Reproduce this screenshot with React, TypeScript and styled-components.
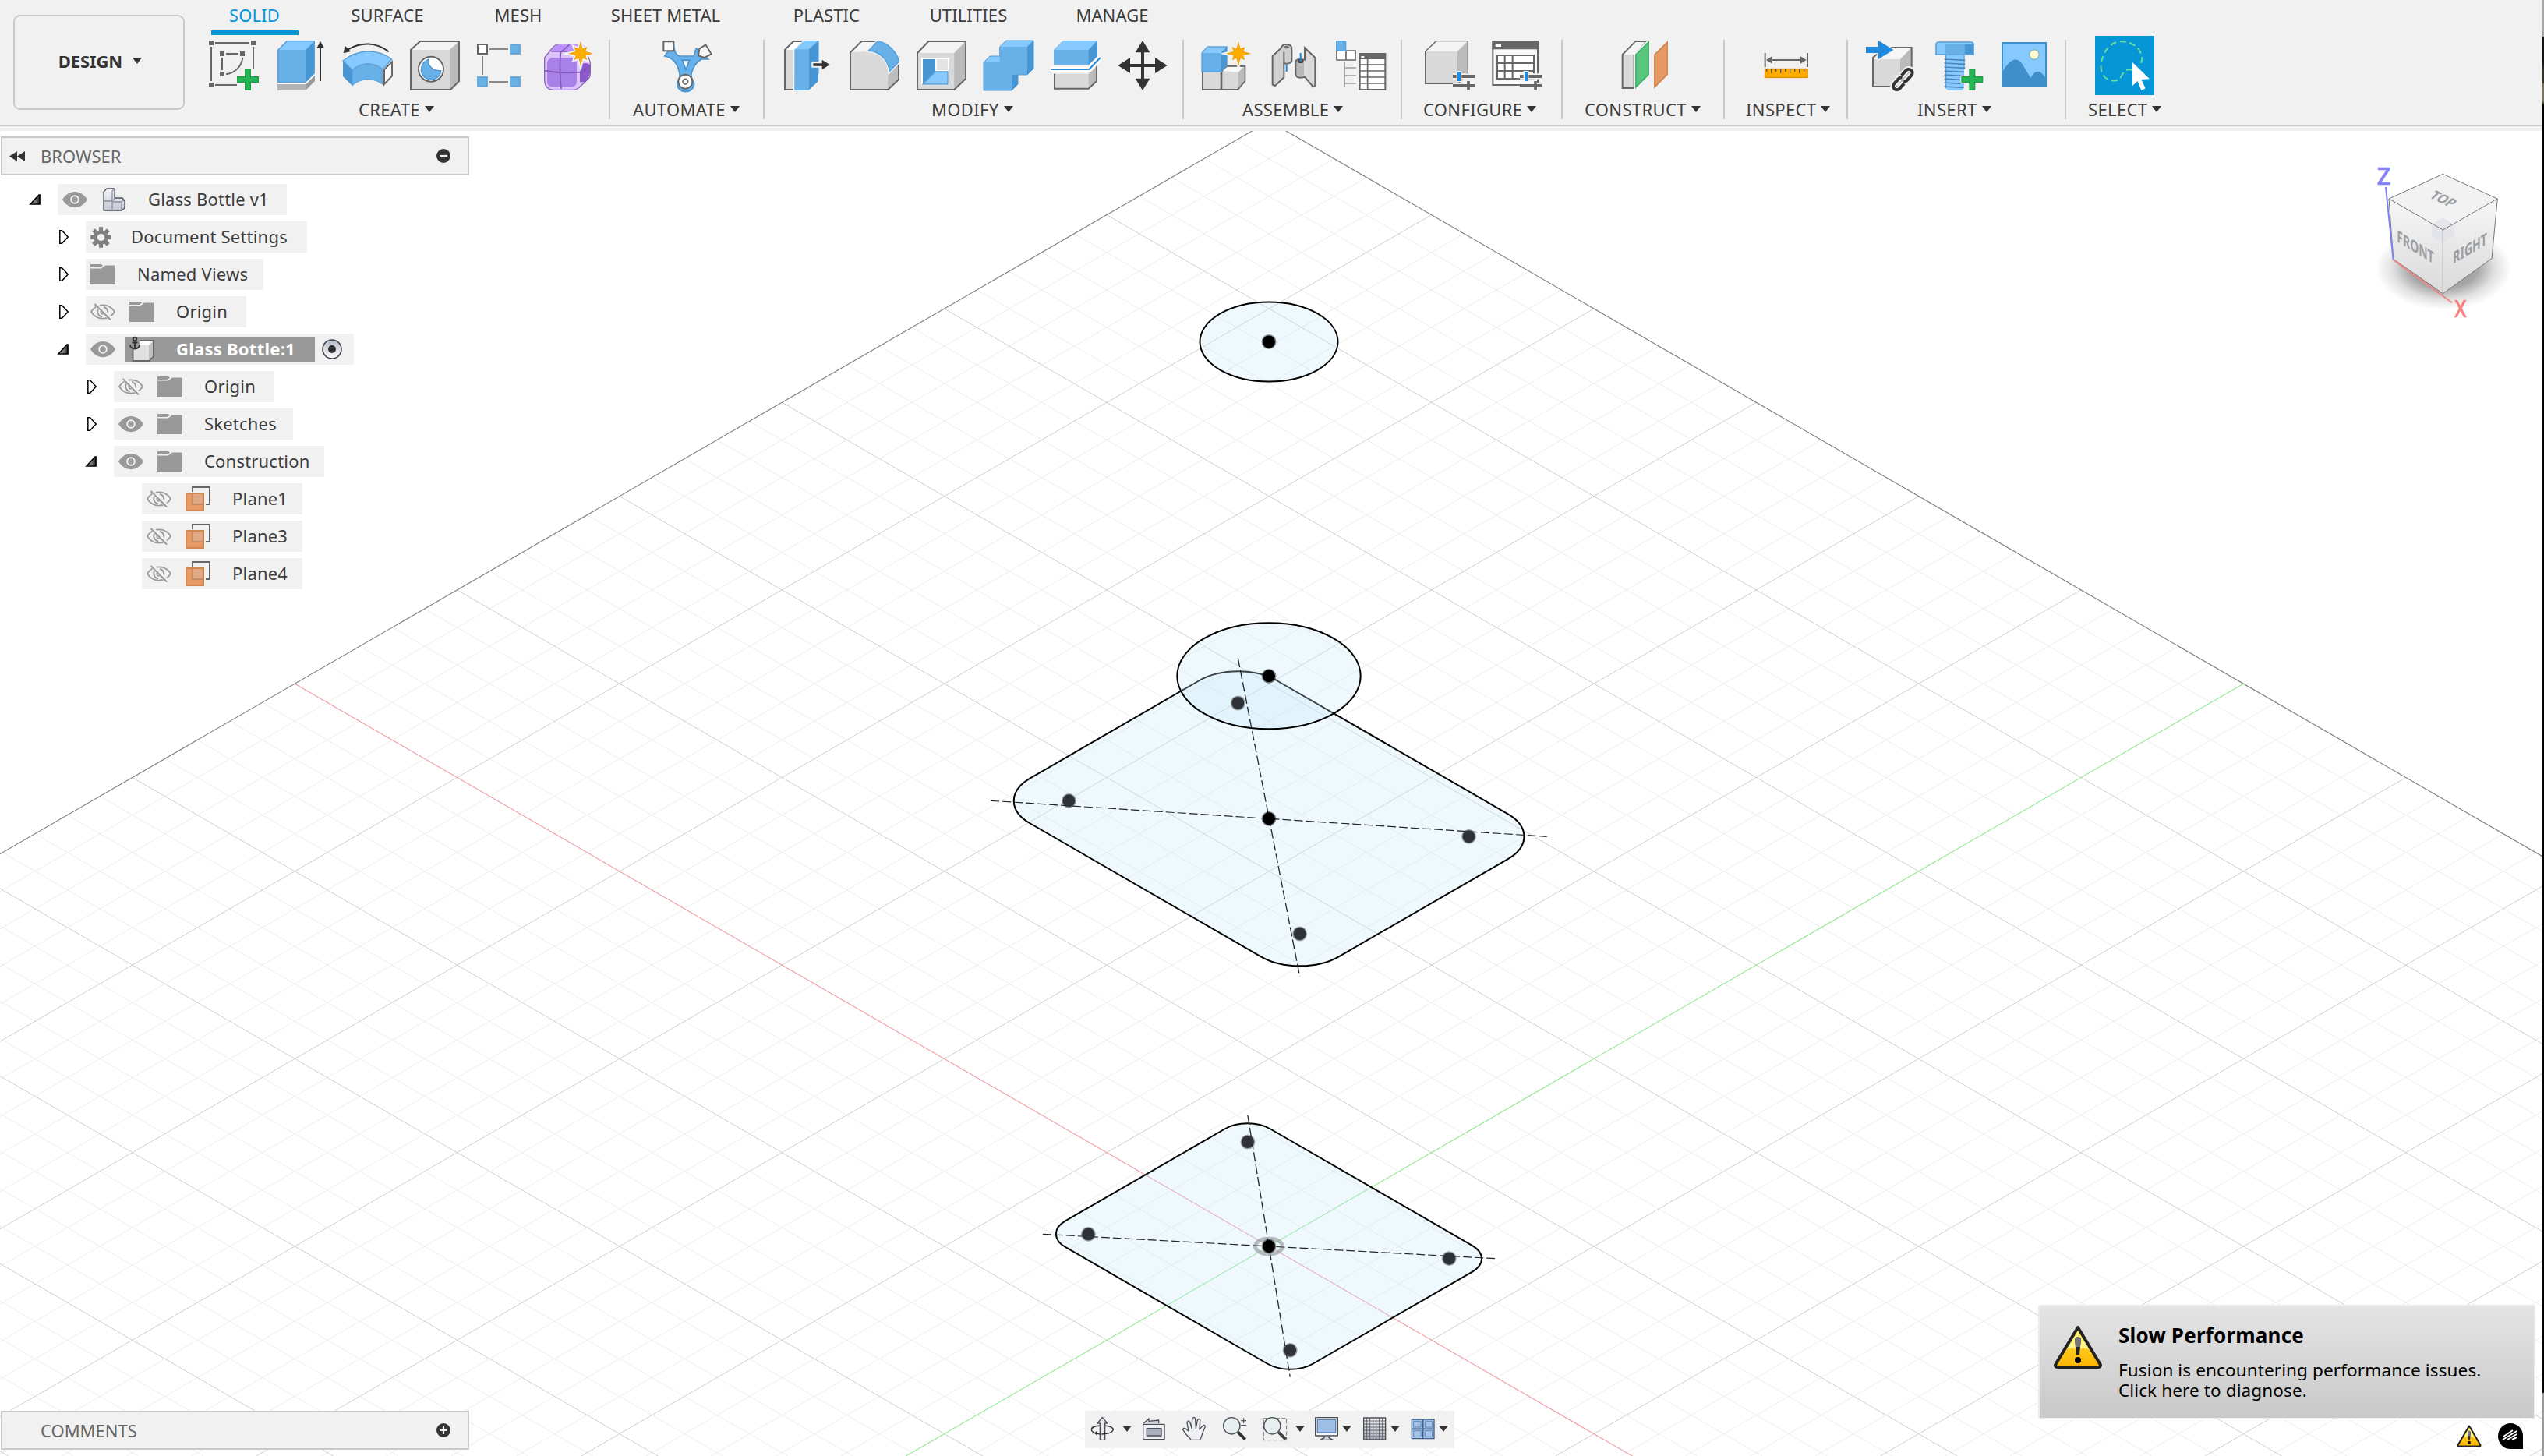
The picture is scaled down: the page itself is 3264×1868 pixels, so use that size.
import React from "react";
import styled, { createGlobalStyle, css } from "styled-components";

const GlobalStyle = createGlobalStyle`
  * { box-sizing: border-box; }
  html, body { margin: 0; padding: 0; }
  body {
    width: 3264px;
    height: 1868px;
    overflow: hidden;
    background: #fff;
    font-family: "Noto Sans", "Open Sans", sans-serif;
    color: #3c3c3c;
  }
  svg { display: block; flex: none; overflow: visible; }
`;

const C = {
  bar: "#f1f1f1",
  line: "#c9c9c9",
  ink: "#3c3c3c",
  accent: "#0696d7",
  grey: "#666666",
  front: "#68b0e8",
  top: "#86c9ff",
  side: "#4796d3",
  edge: "#5a9fd6",
};

/* ---------- shell ---------- */

const Shell = styled.div`
  display: flex;
  width: 3264px;
  height: 1868px;
`;

const Window = styled.div`
  display: flex;
  flex-direction: column;
  width: 3262px;
`;

const DesktopStrip = styled.div`
  width: 2px;
  background: linear-gradient(
    #a4a8ac 0 47px, #14110f 47px 80px, #3a3226 90px 106px, #7d7455 108px 130px,
    #000 135px 1787px, #9a9a9a 1787px 1868px
  );
`;

/* ---------- ribbon ---------- */

const Ribbon = styled.header`
  display: flex;
  height: 168px;
  padding-left: 17px;
  background: linear-gradient(${C.bar} 0 161px, ${C.line} 161px 162px, ${C.bar} 162px);
`;

const WorkspaceButton = styled.button`
  display: flex;
  align-items: center;
  justify-content: center;
  gap: 13px;
  width: 220px;
  height: 122px;
  margin-top: 19px;
  padding: 0 0 4px 3px;
  border: 2px solid ${C.line};
  border-radius: 9px;
  background: ${C.bar};
  color: #333;
  font: 700 22px/30px "Noto Sans", sans-serif;
  letter-spacing: -0.1px;
`;

const RibbonBody = styled.div`
  display: flex;
  flex-direction: column;
`;

const Tabs = styled.nav`
  display: flex;
  gap: 41px;
  height: 51px;
  padding-left: 34px;
`;

const Tab = styled.div<{ $w: number; $active?: boolean }>`
  width: ${(p) => p.$w}px;
  height: 45px;
  border-bottom: 6px solid ${(p) => (p.$active ? C.accent : "transparent")};
  color: ${(p) => (p.$active ? C.accent : C.ink)};
  font-size: 22px;
  line-height: 39px;
  letter-spacing: 0.1px;
  text-indent: -1px;
  text-align: center;
  white-space: nowrap;
`;

const Groups = styled.div`
  display: flex;
  height: 102px;
`;

const Group = styled.section<{ $w: number; $last?: boolean }>`
  display: flex;
  flex-direction: column;
  width: ${(p) => p.$w}px;
  border-right: ${(p) => (p.$last ? "0" : `2px solid ${C.line}`)};
`;

const Tools = styled.div<{ $inset: number }>`
  display: flex;
  gap: 22px;
  height: 65px;
  padding: 1px 0 0 ${(p) => p.$inset}px;
`;

const GroupLabel = styled.div<{ $inset: number }>`
  display: flex;
  align-items: center;
  gap: 6px;
  padding-left: ${(p) => p.$inset}px;
  margin-top: 9px;
  height: 30px;
  font-size: 22px;
  line-height: 30px;
  letter-spacing: 0.35px;
  white-space: nowrap;
`;

const SelectTile = styled.div`
  width: 76px;
  height: 76px;
  margin: -6px 0 -6px;
  padding: 6px;
  background: ${C.accent};
`;

const Caret = styled.span<{ $w?: number }>`
  width: 0;
  height: 0;
  border: ${(p) => (p.$w ?? 12) / 2}px solid transparent;
  border-top: 8px solid #333;
  border-bottom: 0;
`;

/* ---------- tool icons (192-unit grid, 3 units per pixel) ---------- */

const Tool = ({ children }: { children: React.ReactNode }) => (
  <svg width="64" height="64" viewBox="0 0 192 192">{children}</svg>
);

const Plus = ({ x, y }: { x: number; y: number }) => (
  <g transform={`translate(${x} ${y})`}>
    <path d="M30 0h24v30h30v24h-30v30h-24v-30h-30v-24h30z" fill="#1e9e46" stroke="#f1f1f1" strokeWidth="6" paintOrder="stroke" />
    <path d="M34 4h16v30h30v16h-30v30h-16v-30h-30v-16h30z" fill="#27b454" />
  </g>
);

const starPoints = (cx: number, cy: number, R: number) => {
  const pts: string[] = [];
  for (let i = 0; i < 16; i++) {
    const a = (Math.PI / 8) * i - Math.PI / 2;
    const r = i % 2 ? R * 0.42 : i % 4 === 0 ? R : R * 0.74;
    pts.push(`${(cx + r * Math.cos(a)).toFixed(1)},${(cy + r * Math.sin(a)).toFixed(1)}`);
  }
  return pts.join(" ");
};
const Star = ({ x, y }: { x: number; y: number }) => (
  <>
    <polygon points={starPoints(x, y, 48)} fill="#e59a00" stroke="#f1f1f1" strokeWidth="12" paintOrder="stroke" />
    <polygon points={starPoints(x, y, 40)} fill="#ffab00" />
  </>
);

const SketchIcon = () => (
  <Tool>
    <g fill={C.grey}>
      <path d="M0 0h18v18H0zM162 0h18v18h-18zM0 162h18v18H0zM42 42h18v18H42zM120 42h18v18h-18zM42 120h18v18H42z" />
    </g>
    <path d="M24 9h132M9 24v132M171 24v84M24 171h84M66 51h48M51 66v48M66 130c36-6 60-30 64-64" fill="none" stroke={C.grey} strokeWidth="6" />
    <Plus x={108} y={108} />
  </Tool>
);
const ExtrudeIcon = () => (
  <Tool>
    <path d="M6 168h108v24H6z" fill="#b3b3b3" />
    <path d="M114 168l36-36v24l-36 36z" fill="#9a9a9a" />
    <path d="M6 165H115L152 128" fill="none" stroke="#fff" strokeWidth="6" />
    <path d="M6 36h108v126H6z" fill={C.front} />
    <path d="M6 36L42 0h108l-36 36z" fill={C.top} />
    <path d="M114 36l36-36v126l-36 36z" fill={C.side} />
    <path d="M8 160V37L43 2h105v123l-35 35z" fill="none" stroke={C.edge} strokeWidth="4" />
    <path d="M171 156V20" stroke="#333" strokeWidth="6" />
    <path d="M157 30L171 2l15 28z" fill="#333" />
  </Tool>
);
const RevolveIcon = () => (
  <Tool>
    <path d="M0 78C58 32 132 30 188 72L153 110C118 82 70 82 36 114z" fill={C.top} stroke={C.edge} strokeWidth="4" />
    <path d="M0 78L36 114V174L0 138z" fill={C.side} />
    <path d="M36 114C70 84 116 84 151 112V168C116 142 70 142 36 174z" fill={C.front} stroke={C.edge} strokeWidth="3" />
    <path d="M159 112L189 82V136L159 168z" fill="#fafafa" stroke={C.grey} strokeWidth="6" />
    <path d="M176 43C130 6 70 4 20 34" fill="none" stroke="#333" strokeWidth="6" />
    <path d="M2 49L8 20L30 42z" fill="#333" />
  </Tool>
);
const BoxShell = () => (
  <>
    <path d="M3 36L39 3h150v153l-36 33H3z" fill="#d9d9d9" />
    <path d="M3 36L39 3h150l-36 33z" fill="#f3f3f3" />
    <path d="M153 36l36-33v153l-36 33z" fill="#bbbbbb" />
    <path d="M3 36L39 3h150v153l-33 33H3z" fill="none" stroke={C.grey} strokeWidth="6" />
  </>
);
const HoleIcon = () => (
  <Tool>
    <BoxShell />
    <circle cx="81" cy="110" r="48" fill="#fff" stroke={C.grey} strokeWidth="6" />
    <path d="M71 72C30 88 34 150 84 150C108 148 120 130 119 116C92 118 66 100 71 72z" fill={C.front} stroke={C.side} strokeWidth="4" />
  </Tool>
);
const PatternIcon = () => (
  <Tool>
    <path d="M48 33h72M48 159h72M21 60v72" stroke={C.grey} strokeWidth="5" />
    <rect x="3" y="15" width="36" height="36" fill="#fff" stroke={C.grey} strokeWidth="6" />
    <g fill={C.front} stroke={C.edge} strokeWidth="5">
      <rect x="129" y="15" width="36" height="36" /><rect x="3" y="141" width="36" height="36" /><rect x="129" y="141" width="36" height="36" />
    </g>
  </Tool>
);
const FormIcon = () => (
  <Tool>
    <path d="M2 66L36 24Q48 14 60 14H130Q150 14 160 34L178 84V128Q178 140 170 148L134 182Q124 190 112 190H36Q2 188 2 150z" fill="#dcc4fb" stroke="#8a64bd" strokeWidth="4" />
    <path d="M24 42L50 17H140L120 44Z" fill="#bd8ffc" />
    <rect x="12" y="66" width="114" height="114" rx="22" fill="#a97fe8" />
    <path d="M138 96Q156 78 178 94V126L160 160H138z" fill="#8a58c8" />
    <path d="M2 116Q64 128 140 122L178 96M66 186Q58 110 64 46Q80 30 98 16M28 42H120" fill="none" stroke="#8159b8" strokeWidth="5" />
    <Star x={141} y={50} />
  </Tool>
);
const AutomateIcon = () => (
  <Tool>
    <path d="M8 60C40 66 60 92 66 130C70 150 58 150 56 166A32 30 0 0 0 122 166C120 150 106 148 112 124C118 100 130 84 150 72L176 72L130 30C122 46 126 56 118 60H68C52 58 44 40 44 10z" fill={C.front} stroke={C.side} strokeWidth="5" />
    <path d="M76 76h28l-14 36z" fill="#fff" stroke={C.side} strokeWidth="6" />
    <path d="M4 4h38v36H4z" fill="#f8f8f8" stroke={C.grey} strokeWidth="6" />
    <path d="M142 32L166 16L188 52L162 66L138 58z" fill="#f8f8f8" stroke={C.grey} strokeWidth="6" />
    <circle cx="88" cy="158" r="27" fill="#fff" stroke={C.grey} strokeWidth="6" />
    <circle cx="88" cy="158" r="10" fill="none" stroke={C.grey} strokeWidth="5" />
  </Tool>
);
const PressPullIcon = () => (
  <Tool>
    <path d="M9 36L42 3H76L42 36V189H9z" fill="#d9d9d9" /><path d="M9 36L42 3h34L42 36z" fill="#fff" />
    <path d="M42 189H9V36L42 3H74" fill="none" stroke={C.grey} strokeWidth="6" />
    <path d="M46 36L84 0h56v126l-38 66H46z" fill={C.front} stroke="#f1f1f1" strokeWidth="6" paintOrder="stroke" />
    <path d="M50 34L84 0h52l-34 34z" fill={C.top} /><path d="M102 34L138 2V156L102 190z" fill={C.side} />
    <path d="M118 88h34v-14l30 19-30 19v-14h-34z" fill="#333" stroke="#f1f1f1" strokeWidth="12" paintOrder="stroke" />
  </Tool>
);
const FilletIcon = () => (
  <Tool>
    <path d="M3 48L44 3H108L190 90V150L148 189H3z" fill="#d9d9d9" />
    <path d="M3 46L44 3H110L74 42z" fill="#f5f5f5" />
    <path d="M148 128L190 90V150L148 189z" fill="#bdbdbd" />
    <path d="M100 3H46L3 46V189H148L189 150V94" fill="none" stroke={C.grey} strokeWidth="6" />
    <path d="M108 0C160 8 190 60 192 82L152 124C152 80 116 42 70 42z" fill={C.front} stroke="#f6f6f6" strokeWidth="8" paintOrder="stroke" />
    <path d="M108 2C160 10 188 60 190 82L154 118C150 78 118 42 74 38z" fill="none" stroke={C.edge} strokeWidth="4" />
  </Tool>
);
const ShellIcon = () => (
  <Tool>
    <path d="M3 48L46 3h143v144l-44 42H3z" fill="#d9d9d9" /><path d="M3 48L46 3h143l-44 45z" fill="#f3f3f3" /><path d="M145 48l44-45v144l-44 42z" fill="#bbb" />
    <path d="M3 48L46 3h143v144l-44 42H3z" fill="none" stroke={C.grey} strokeWidth="6" />
    <path d="M18 66h108v106H18z" fill="#fff" /><path d="M24 72h48v48L24 168z" fill={C.side} />
    <path d="M24 168L72 120h48v48z" fill={C.top} stroke={C.edge} strokeWidth="4" /><path d="M78 72h42v42H78z" fill="#e4e4e4" />
  </Tool>
);
const CombineIcon = () => (
  <Tool>
    <path d="M0 84L24 60H62V24L86 0H192V108L168 132H132V168L108 192H0z" fill={C.front} stroke={C.edge} strokeWidth="3" />
    <path d="M2 84L24 62H62V84zM64 24L86 2H190L168 24z" fill={C.top} />
    <path d="M168 24L192 0V108L168 132zM110 132H132V168L110 192z" fill={C.side} />
  </Tool>
);
const SplitIcon = () => (
  <Tool>
    <path d="M15 128H146L178 98V156L146 184H15z" fill="#d9d9d9" /><path d="M146 128L178 98V156L146 184z" fill="#bbb" />
    <path d="M15 128V185H146L177 156V98" fill="none" stroke={C.grey} strokeWidth="6" />
    <path d="M12 36L48 0H180V60L146 94H12z" fill={C.front} /><path d="M14 36L48 2H178L146 36z" fill={C.top} /><path d="M146 36L180 0V60L146 94z" fill={C.side} />
    <path d="M0 111H148L191 66" fill="none" stroke="#fff" strokeWidth="22" />
    <path d="M0 111H148L191 66" fill="none" stroke="#1f8ade" strokeWidth="6" />
  </Tool>
);
const MoveIcon = () => (
  <Tool>
    <path d="M96 0L124 46H102V90H144V66L191 96L144 126V102H102V146H124L96 192L68 146H90V102H48V126L1 96L48 66V90H90V46H68z" fill="#333" />
  </Tool>
);
const NewComponentIcon = () => (
  <Tool>
    <path d="M3 120H74V189H3z" fill="#d9d9d9" stroke={C.grey} strokeWidth="6" />
    <path d="M76 120L96 98H166V156L138 189H76z" fill="#d9d9d9" stroke={C.grey} strokeWidth="6" />
    <path d="M80 118L98 102H162L140 122z" fill="#f8f8f8" /><path d="M140 122L163 102V155L140 184z" fill="#bbb" />
    <path d="M0 48L22 24H96V96L74 120H0z" fill={C.front} stroke={C.edge} strokeWidth="4" /><path d="M2 48L22 26H94L74 48z" fill={C.top} /><path d="M74 48L96 26V96L74 118z" fill={C.side} />
    <Star x={141} y={50} />
  </Tool>
);
const JointIcon = () => (
  <Tool>
    <path d="M14 60L46 30Q54 12 68 16Q88 16 88 30V78Q84 92 58 88V142L24 174L14 170z" fill="#d0d0d0" stroke={C.grey} strokeWidth="6" />
    <path d="M58 88V44" stroke={C.grey} strokeWidth="6" /><ellipse cx="68" cy="26" rx="10" ry="5" fill={C.grey} />
    <path d="M138 28L178 66V174L170 178L138 140Q106 148 104 132V80Q106 68 138 74z" fill="#d9d9d9" stroke={C.grey} strokeWidth="6" />
    <path d="M107 82h28v52h-28z" fill="#b8b8b8" /><ellipse cx="122" cy="80" rx="12" ry="7" fill="#444" />
    <path d="M68 92V120M122 48V80" stroke="#1f8ade" strokeWidth="6" />
  </Tool>
);
const BomIcon = () => (
  <Tool>
    <path d="M3 39h36v36H3zM39 39h36v36H39z" fill="#fff" stroke={C.grey} strokeWidth="5" />
    <rect x="2" y="2" width="36" height="38" fill={C.front} stroke={C.edge} strokeWidth="4" />
    <path d="M33 84V180M33 105H78M33 135H78M33 165H78" stroke="#999" strokeWidth="5" />
    <rect x="92" y="51" width="98" height="138" fill="#fff" stroke={C.grey} strokeWidth="6" />
    <path d="M90 48h102v24H90z" fill={C.grey} /><path d="M97 60h12v6H97z" fill="#fff" />
    <path d="M92 93h98M92 117h98M92 141h98M92 165h98M122 72v118" stroke={C.grey} strokeWidth="5" />
  </Tool>
);
const Sliders = () => (
  <>
    <path d="M108 138h84M108 174h84" stroke="#f1f1f1" strokeWidth="22" />
    <path d="M108 138h84M108 174h84" stroke={C.grey} strokeWidth="12" />
    <path d="M168 156v36" stroke={C.grey} strokeWidth="11" /><path d="M132 117v42" stroke="#f1f1f1" strokeWidth="20" /><path d="M132 120v36" stroke="#1f8ade" strokeWidth="12" />
  </>
);
const ConfigureIcon = () => (
  <Tool>
    <path d="M2 42L44 2H166V128L128 166H2z" fill="#d9d9d9" /><path d="M2 42L44 2H166L126 42z" fill="#f3f3f3" /><path d="M126 42L166 2V128L126 166z" fill="#bbb" />
    <path d="M2 42L44 2H166V128L128 166H2z" fill="none" stroke={C.grey} strokeWidth="4" />
    <Sliders />
  </Tool>
);
const ConfigTableIcon = () => (
  <Tool>
    <path d="M4 3H177V171H4z" fill="#f8f8f8" stroke={C.grey} strokeWidth="6" /><path d="M2 0h178v34H2z" fill={C.grey} /><path d="M14 12h22v12H14z" fill="#fff" />
    <path d="M21 57H162V147H21zM21 87H162M21 117H162M50 57V147M80 57V147" fill="#fff" stroke={C.grey} strokeWidth="6" />
    <Sliders />
  </Tool>
);
const ConstructIcon = () => (
  <Tool>
    <path d="M11 54L62 3H100L56 54V183H11z" fill="#d9d9d9" stroke={C.grey} strokeWidth="6" /><path d="M16 54L62 6H98L56 54z" fill="#f5f5f5" />
    <path d="M60 54L114 0V132L60 186z" fill="#59c57f" stroke="#f1f1f1" strokeWidth="10" paintOrder="stroke" /><path d="M63 55L111 7V130L63 178z" fill="none" stroke="#3fae68" strokeWidth="4" />
    <path d="M132 54L186 0V132L132 186z" fill="#e59a66" /><path d="M135 55L183 7V130L135 178z" fill="none" stroke="#cf8450" strokeWidth="4" />
  </Tool>
);
const MeasureIcon = () => (
  <Tool>
    <path d="M14 48V102M177 48V102M24 75H168" stroke={C.grey} strokeWidth="6" /><path d="M18 75L42 60V90zM173 75L149 60V90z" fill={C.grey} />
    <rect x="14" y="110" width="163" height="32" fill="#ffab00" stroke="#e69500" strokeWidth="5" />
    <path d="M20 108v12M38 108v18M56 108v12M74 108v18M92 108v12M110 108v18M128 108v12M146 108v18M164 108v12" stroke="#555" strokeWidth="4" />
  </Tool>
);
const LINK = "M8-14H34a14 14 0 0 1 0 28H8a14 14 0 0 1-12-7M-8 14H-34a14 14 0 0 1 0-28H-8a14 14 0 0 1 12 7";
const InsertIcon = () => (
  <Tool>
    <path d="M27 72L72 27H176V132L134 177H27z" fill="#d9d9d9" /><path d="M27 72L72 27H176L132 72z" fill="#f6f6f6" /><path d="M132 72L176 27V132L132 177z" fill="#bbb" />
    <path d="M27 66L72 27H176V132L134 177H27z" fill="none" stroke={C.grey} strokeWidth="6" />
    <path d="M0 24H48V0L106 36L48 72V48H0z" fill="#1f8ade" stroke="#f1f1f1" strokeWidth="8" paintOrder="stroke" />
    <g transform="translate(142 150) rotate(-48)" fill="none">
      <path d={LINK} stroke="#f1f1f1" strokeWidth="24" />
      <path d={LINK} stroke="#333" strokeWidth="12" />
    </g>
  </Tool>
);
const FastenerIcon = () => (
  <Tool>
    <path d="M48 54H120V182L110 192H58L48 182z" fill={C.top} />
    <path d="M50 54V184M120 54V110" stroke={C.edge} strokeWidth="4" />
    <path d="M44 72L124 76M44 87L124 91M44 102L124 106M44 117L120 121M44 132L110 136M44 147L104 151M44 162L106 166M44 177L118 181" stroke="#4f86b8" strokeWidth="5" />
    <path d="M12 12L18 6H150L156 12V54H12z" fill={C.top} stroke={C.edge} strokeWidth="5" /><path d="M48 14h74v38H48z" fill={C.front} /><path d="M122 14h32v38h-32z" fill={C.side} />
    <Plus x={109} y={108} />
  </Tool>
);
const CanvasIcon = () => (
  <Tool>
    <rect x="9" y="9" width="168" height="168" fill={C.top} />
    <path d="M9 122C30 84 60 54 84 88L118 144C134 118 150 104 177 146V177H9z" fill="#3f8fcb" />
    <circle cx="132" cy="54" r="19" fill="#fffbd0" stroke="#8ab6c8" strokeWidth="5" />
    <rect x="9" y="9" width="168" height="168" fill="none" stroke="#3f8fcb" strokeWidth="6" />
  </Tool>
);
const SelectIcon = () => (
  <Tool>
    <path d="M126 114C108 106 92 118 84 136C76 154 60 158 38 152C0 138-4 96 18 48C38 8 78-8 122 12C160 28 176 74 150 100" fill="none" stroke="#66df9b" strokeWidth="6" strokeDasharray="24 14" />
    <path d="M126 84L192 148L160 150L176 184L160 192L146 156L126 174z" fill="#fff" />
  </Tool>
);

type GroupDef = { label: string; width: number; inset: number; labelInset: number; tools: React.FC[] };
const GROUPS: GroupDef[] = [
  { label: "CREATE", width: 546, inset: 31, labelInset: 223, tools: [SketchIcon, ExtrudeIcon, RevolveIcon, HoleIcon, PatternIcon, FormIcon] },
  { label: "AUTOMATE", width: 198, inset: 67, labelInset: 29, tools: [AutomateIcon] },
  { label: "MODIFY", width: 538, inset: 23, labelInset: 214, tools: [PressPullIcon, FilletIcon, ShellIcon, CombineIcon, SplitIcon, MoveIcon] },
  { label: "ASSEMBLE", width: 280, inset: 23, labelInset: 75, tools: [NewComponentIcon, JointIcon, BomIcon] },
  { label: "CONFIGURE", width: 206, inset: 29, labelInset: 27, tools: [ConfigureIcon, ConfigTableIcon] },
  { label: "CONSTRUCT", width: 208, inset: 73, labelInset: 28, tools: [ConstructIcon] },
  { label: "INSPECT", width: 158, inset: 47, labelInset: 27, tools: [MeasureIcon] },
  { label: "INSERT", width: 280, inset: 23, labelInset: 89, tools: [InsertIcon, FastenerIcon, CanvasIcon] },
];

const TABS: [string, number][] = [
  ["SOLID", 112], ["SURFACE", 147], ["MESH", 107], ["SHEET METAL", 189], ["PLASTIC", 142], ["UTILITIES", 140], ["MANAGE", 147],
];

/* ---------- viewport ---------- */

const Viewport = styled.main`
  position: relative;
  height: 1700px;
  overflow: hidden;
  background: #fff;
`;

const Scene = styled.svg`
  position: absolute;
  inset: 0;
`;

const OX = 1628.3, OY = 1599, UX = 208.35, UY = 120.3;
const iso = (a: number, b: number): [number, number] => [OX + (a - b) * UX, OY + (a + b) * UY];
const seg = (a1: number, b1: number, a2: number, b2: number) => {
  const [x1, y1] = iso(a1, b1);
  const [x2, y2] = iso(a2, b2);
  return `M${x1.toFixed(1)} ${y1.toFixed(1)}L${x2.toFixed(1)} ${y2.toFixed(1)}`;
};
const gridPath = (major: boolean) => {
  let d = "";
  for (let i = -29; i <= 29; i++) {
    if ((i % 5 === 0) !== major || i === 0) continue;
    const t = i / 5;
    d += seg(t, -6, t, 6) + seg(-6, t, 6, t);
  }
  return d;
};

const PROFILE_FILL = "rgba(197,232,249,.29)";

type Profile = { cx: number; cy: number; w: number; h: number; r: number };
const Plate = ({ cx, cy, w, h, r }: Profile) => (
  <rect
    transform={`matrix(.866 .5 -.866 .5 ${cx} ${cy})`}
    x={-w} y={-h} width={2 * w} height={2 * h} rx={r}
    fill={PROFILE_FILL} stroke="#000" strokeWidth="2" vectorEffect="non-scaling-stroke"
  />
);

const Dots = ({ at, fill = "#2e3236" }: { at: [number, number][]; fill?: string }) => (
  <>
    {at.map(([x, y]) => (
      <g key={`${x}-${y}`} fill={fill}>
        <circle cx={x} cy={y} r="9.4" opacity=".45" />
        <circle cx={x} cy={y} r="8" />
      </g>
    ))}
  </>
);

const Sketches = () => (
  <Scene width="3262" height="1700" viewBox="0 168 3262 1700">
    <path d={gridPath(false)} stroke="#ededed" strokeWidth="1" fill="none" />
    <path d={gridPath(true)} stroke="#cfcfcf" strokeWidth="1" fill="none" />
    <path d={seg(-6, -6, 6, -6) + seg(-6, -6, -6, 6)} stroke="#858585" strokeWidth="1.2" fill="none" />
    <path d={seg(-6, 0, 6, 0)} stroke="#f29ca2" strokeWidth="1.1" />
    <path d={seg(0, -6, 0, 6)} stroke="#94e894" strokeWidth="1.1" />

    <Plate cx={1628.1} cy={1050.3} w={228.8} h={183} r={57.7} />
    <Plate cx={1628} cy={1599} w={183.3} h={151.7} r={33.5} />
    <g fill={PROFILE_FILL} stroke="#000" strokeWidth="2">
      <ellipse cx="1628" cy="438.5" rx="88.5" ry="51" />
      <ellipse cx="1628" cy="867.3" rx="117.7" ry="68" />
    </g>
    <g stroke="#22252a" strokeWidth="1.2" strokeDasharray="11 4">
      <path d="M1271.2 1027.3L1984.7 1073.3M1337.9 1583.3L1918.7 1614.7" />
    </g>
    <g stroke="#22252a" strokeWidth="1.3" strokeDasharray="12 4">
      <path d="M1588.3 844L1667.6 1252.7M1600.9 1431L1655.2 1766.7" />
    </g>
    <ellipse cx="1628" cy="1599" rx="17.5" ry="10" fill="none" stroke="#6e7376" strokeOpacity=".45" strokeWidth="5" />
    <Dots at={[[1371.4, 1027.3], [1588.3, 902], [1884.5, 1073.3], [1667.6, 1198], [1396.4, 1583.3], [1600.9, 1465], [1859.3, 1614.7], [1655.2, 1732.3]]} />
    <Dots fill="#000" at={[[1628, 438.5], [1628, 867.3], [1628, 1050.3], [1628, 1599]]} />
  </Scene>
);

/* ---------- browser panel ---------- */

const SideDock = styled.aside`
  position: relative;
  display: flex;
  flex-direction: column;
  justify-content: space-between;
  width: 602px;
  height: 1700px;
  padding: 7px 0 8px 1px;
`;

const PanelBar = styled.div`
  display: flex;
  align-items: center;
  height: 50px;
  border: 2px solid ${C.line};
  background: ${C.bar};
  color: #666;
  font-size: 22px;
  line-height: 30px;
  padding: 0 22px 0 9px;
`;

const CollapseSlot = styled.span`
  width: 40px;
`;

const PanelTitle = styled.span`
  flex: 1;
  margin-top: -1px;
`;

const Tree = styled.ul`
  display: flex;
  flex-direction: column;
  gap: 8px;
  margin: 11px 0 0;
  padding: 0;
  list-style: none;
`;

const TreeRow = styled.li<{ $level: number }>`
  display: flex;
  align-items: center;
  height: 40px;
  padding-left: ${(p) => 37 + p.$level * 36}px;
`;

const ArrowSlot = styled.span`
  width: 36px;
`;

const ArrowClosedPad = styled.span`
  display: block;
  padding-left: 2px;
`;

const Chip = styled.div<{ $w: number }>`
  display: flex;
  align-items: center;
  width: ${(p) => p.$w}px;
  height: 40px;
  padding-left: 6px;
  background: ${C.bar};
  font-size: 22px;
  letter-spacing: 0.2px;
  white-space: nowrap;
`;

const NodeName = styled.span`
  margin-top: -2px;
  line-height: 30px;
`;

const Slot = styled.span<{ $w: number }>`
  width: ${(p) => p.$w}px;
  flex: none;
`;

const Selected = styled.span`
  display: flex;
  align-items: center;
  width: 244px;
  height: 32px;
  padding-left: 6px;
  background: #999;
  color: #fff;
  font-weight: 700;
  letter-spacing: 0.25px;
`;

const RadioSlot = styled.span`
  padding-left: 9px;
`;

const Eye = () => (
  <svg width="32" height="24" viewBox="0 0 32 24">
    <path d="M0 12C8-1.500 24-1.500 32 12C24 25.500 8 25.500 0 12z" fill="#999" />
    <circle cx="16" cy="12" r="4.800" fill="none" stroke="#f1f1f1" strokeWidth="2" />
  </svg>
);
const EyeOff = () => (
  <svg width="32" height="24" viewBox="0 0 32 24" fill="none" stroke="#999" strokeWidth="1.800">
    <path d="M1 12C8 .5 24 .5 31 12C24 23.500 8 23.500 1 12z" />
    <path d="M11 7.500A6.500 6.500 0 0 0 15 18.300M21 16A6.500 6.500 0 0 0 17 5.800M13.500 10.500A3 3 0 0 0 17 14.800" />
    <path d="M6 1L27 22" stroke="#f1f1f1" strokeWidth="5" /><path d="M5.500 2L26 22.500" strokeWidth="2" />
  </svg>
);
const Folder = () => (
  <svg width="32" height="26" viewBox="0 0 32 26" fill="#999">
    <path d="M0 0H14L16 1.800L13 4H0z" /><path d="M0 5.500H14L19 1.500H32V26H0z" />
  </svg>
);
const Gear = () => (
  <svg width="27" height="27" viewBox="-13.500 -13.500 27 27">
    <g fill="#808080">
      {[0, 45, 90, 135].map((r) => <rect key={r} x="-2.600" y="-13.300" width="5.200" height="26.600" transform={`rotate(${r})`} />)}
      <circle r="9.300" />
    </g>
    <circle r="4.600" fill="#f1f1f1" />
  </svg>
);
const Assembly = () => (
  <svg width="29" height="30" viewBox="0 0 29 30">
    <defs>
      <linearGradient id="asm" x1="0" y1="0" x2="0" y2="1"><stop offset="0" stopColor="#f4f6fa" /><stop offset="1" stopColor="#c3c8d6" /></linearGradient>
    </defs>
    <g stroke="#4a4d55" strokeWidth="1.300" strokeLinejoin="round">
      <path d="M1 5L5 1H15V13H25L28 17V26L24 29H1z" fill="url(#asm)" />
      <path d="M12 29V17L15 14M1 17H12M24 29V18L28 15M13 18H24M12 17V4L15 1" fill="none" stroke="#8b8f9b" />
    </g>
  </svg>
);
const PinnedComponent = () => (
  <svg width="32" height="32" viewBox="0 0 32 32">
    <path d="M4.500 11L10 5H31V25L25 31H4.500z" fill="#e0e0e0" stroke="#666" strokeWidth="2" />
    <path d="M6 11L10.500 6H30L25 11z" fill="#fff" /><path d="M25 11L30 6V25L25 30z" fill="#c0c0c0" />
    <path d="M-1 0H13V13L8 16H-1z" fill="#999" />
    <g fill="none" stroke="#333" strokeWidth="2"><circle cx="7" cy="3" r="2.200" /><path d="M7 5V15M3.500 7.500H10.500M1 10.500C1 14 4 15.500 7 15.500S13 14 13 10.500" /></g>
  </svg>
);
const Plane = () => (
  <svg width="32" height="32" viewBox="0 0 32 32">
    <path d="M9 7V1H31V23H26" fill="none" stroke="#666" strokeWidth="2" />
    <rect x="1" y="9" width="22" height="22" fill="#e89a64" stroke="#d0864f" strokeWidth="2" />
    <rect x="9" y="10" width="13" height="13" fill="#e0a985" /><path d="M9 9V23H22" fill="none" stroke="#bb8158" strokeWidth="1.600" />
  </svg>
);
const Radio = () => (
  <svg width="26" height="26" viewBox="0 0 26 26">
    <defs><linearGradient id="rad" x1="0" y1="0" x2="0" y2="1"><stop offset="0" stopColor="#b4b9ca" /><stop offset="1" stopColor="#fff" /></linearGradient></defs>
    <circle cx="13" cy="13" r="12" fill="url(#rad)" stroke="#3a3d44" strokeWidth="1.600" /><circle cx="13" cy="13" r="5" fill="#2b2b2b" />
  </svg>
);
const ArrowClosed = () => (
  <svg width="12" height="18" viewBox="0 0 12 18"><path d="M.8 .8H3.500L11.200 9L3.500 17.200H.8z" fill="#fff" stroke="#000" strokeWidth="1.500" /></svg>
);
const ArrowOpen = () => (
  <svg width="14" height="14" viewBox="0 0 14 14">
    <defs><linearGradient id="tri"><stop offset="0" stopColor="#ddd" /><stop offset="1" stopColor="#222" /></linearGradient></defs>
    <path d="M1 13L12 1H13V13z" fill="url(#tri)" stroke="#000" strokeWidth="1.700" />
  </svg>
);

const ICONS = { assembly: Assembly, gear: Gear, folder: Folder, plane: Plane, component: PinnedComponent };
type Node = {
  label: string; level: number; width: number; icon: keyof typeof ICONS; iconSlot: number;
  open?: boolean; eye?: "on" | "off"; leaf?: boolean; active?: boolean;
};
const TREE: Node[] = [
  { label: "Glass Bottle v1", level: 0, width: 294, icon: "assembly", open: true, eye: "on", iconSlot: 58 },
  { label: "Document Settings", level: 1, width: 284, icon: "gear", iconSlot: 52 },
  { label: "Named Views", level: 1, width: 228, icon: "folder", iconSlot: 60 },
  { label: "Origin", level: 1, width: 206, icon: "folder", eye: "off", iconSlot: 60 },
  { label: "Glass Bottle:1", level: 1, width: 344, icon: "component", open: true, eye: "on", active: true, iconSlot: 60 },
  { label: "Origin", level: 2, width: 206, icon: "folder", eye: "off", iconSlot: 60 },
  { label: "Sketches", level: 2, width: 230, icon: "folder", eye: "on", iconSlot: 60 },
  { label: "Construction", level: 2, width: 270, icon: "folder", open: true, eye: "on", iconSlot: 60 },
  { label: "Plane1", level: 3, width: 206, icon: "plane", eye: "off", leaf: true, iconSlot: 60 },
  { label: "Plane3", level: 3, width: 206, icon: "plane", eye: "off", leaf: true, iconSlot: 60 },
  { label: "Plane4", level: 3, width: 206, icon: "plane", eye: "off", leaf: true, iconSlot: 60 },
];

const TreeItem = ({ n }: { n: Node }) => {
  const Icon = ICONS[n.icon];
  const body = (
    <>
      <Slot $w={n.iconSlot}><Icon /></Slot>
      <NodeName>{n.label}</NodeName>
    </>
  );
  return (
    <TreeRow $level={n.level}>
      <ArrowSlot>{n.leaf ? null : n.open ? <ArrowOpen /> : <ArrowClosedPad><ArrowClosed /></ArrowClosedPad>}</ArrowSlot>
      <Chip $w={n.width}>
        {n.eye && <Slot $w={n.active ? 44 : n.icon === "assembly" ? 52 : 50}>{n.eye === "on" ? <Eye /> : <EyeOff />}</Slot>}
        {n.active ? <><Selected>{body}</Selected><RadioSlot><Radio /></RadioSlot></> : body}
      </Chip>
    </TreeRow>
  );
};

const Badge = ({ plus }: { plus?: boolean }) => (
  <svg width="18" height="18" viewBox="0 0 18 18">
    <circle cx="9" cy="9" r="9" fill="#333" />
    <path d={plus ? "M4 9H14M9 4V14" : "M4 9H14"} stroke="#f1f1f1" strokeWidth="2.200" />
  </svg>
);

/* ---------- view cube ---------- */

const CubeHolder = styled.div`
  position: absolute;
  right: -2px;
  top: -8px;
`;

const cubeText = css`
  font-family: "Noto Sans", sans-serif;
  font-weight: 700;
  fill: #9a9da1;
`;
const FaceText = styled.text`
  ${cubeText}
  font-size: 56px;
`;
const AxisText = styled.text<{ $c: string }>`
  font-family: "Noto Sans", sans-serif;
  font-weight: 500;
  font-size: 92px;
  fill: ${(p) => p.$c};
  stroke: ${(p) => p.$c};
  stroke-width: 2px;
`;

const ViewCube = () => (
  <CubeHolder>
    <svg width="304" height="270" viewBox="0 0 912 810">
      <defs>
        <radialGradient id="shadow">
          <stop offset="0" stopColor="#000" stopOpacity=".5" />
          <stop offset=".5" stopColor="#000" stopOpacity=".34" />
          <stop offset=".75" stopColor="#000" stopOpacity=".12" />
          <stop offset="1" stopColor="#000" stopOpacity="0" />
        </radialGradient>
        <linearGradient id="face" x1="0" y1="0" x2="0" y2="1"><stop offset="0" stopColor="#f6f6f6" /><stop offset="1" stopColor="#dadada" /></linearGradient>
      </defs>
      <ellipse cx="526" cy="552" rx="262" ry="160" fill="url(#shadow)" />
      <path d="M315 285L523 405V650L332 517z" fill="url(#face)" />
      <path d="M523 405L733 285L711 515L523 650z" fill="url(#face)" />
      <path d="M315 285L523 190L733 285L523 405z" fill="#f2f2f2" />
      <path d="M480 385L523 358L566 385V428L523 452L480 428z" fill="#dfe2ea" opacity=".75" />
      <path d="M315 285L523 190L733 285L523 405zM315 285L332 517L523 650L711 515L733 285M523 405V650" fill="none" stroke="#777" strokeWidth="3" />
      <path d="M303 240L332 520" stroke="#7f7ff0" strokeWidth="6" />
      <path d="M332 520L558 685" stroke="#f08484" strokeWidth="6" opacity=".9" />
      <FaceText transform="matrix(.75 .46 0 1.120 346 449)">FRONT</FaceText>
      <FaceText transform="matrix(.75 -.44 0 1.120 562 536)">RIGHT</FaceText>
      <FaceText transform="matrix(.78 .37 -.7 .66 468 279)">TOP</FaceText>
      <AxisText $c="#8383f3" x="269" y="231">Z</AxisText>
      <AxisText $c="#f78080" transform="translate(568 741) scale(.82 1)">X</AxisText>
    </svg>
  </CubeHolder>
);

/* ---------- navigation bar ---------- */

const NavBar = styled.div`
  position: absolute;
  left: 1392px;
  bottom: 10px;
  display: flex;
  align-items: center;
  width: 474px;
  height: 48px;
  padding: 0 0 2px 8px;
  background: ${C.bar};
`;

const NavItem = styled.div<{ $w: number; $gap?: number }>`
  display: flex;
  flex: none;
  align-items: center;
  gap: ${(p) => p.$gap ?? 5}px;
  width: ${(p) => p.$w}px;
`;

const N = ({ children }: { children: React.ReactNode }) => (
  <svg width="30" height="30" viewBox="0 0 90 90" fill="none" stroke="#4b4d55" strokeWidth="4" strokeLinejoin="round">{children}</svg>
);
const OrbitIcon = () => (
  <N>
    <path d="M34 88V24H24L43 1L62 24H53V88z" fill="#e6e8ee" />
    <path d="M34 66C-12 60-8 34 34 34M53 34C98 36 96 64 40 66" strokeWidth="4.500" stroke="#333" /><path d="M12 62L24 52V72z" fill="#333" stroke="none" />
  </N>
);
const LookIcon = () => (
  <N>
    <path d="M4 24L24 6V16L62 12V24" fill="#d2d5dd" /><rect x="2" y="28" width="82" height="58" fill="#eef0f4" /><rect x="16" y="44" width="56" height="28" fill="#a9aebd" />
  </N>
);
const PanIcon = () => (
  <N>
    <path d="M34 88C22 74 8 62 2 48C4 40 12 42 24 54L18 22C20 12 26 12 30 22L36 44L38 8C42-1 48-1 50 8L52 44L58 12C64 4 70 8 68 18L66 48L78 34C86 28 90 34 86 42C76 62 74 78 68 88z" fill="#eef0f4" />
  </N>
);
const ZoomIcon = () => (
  <N>
    <path d="M58 58L86 86" stroke="#333" strokeWidth="12" /><circle cx="34" cy="34" r="32" fill="#e6efed" /><path d="M70 14h20M80 4v20M70 32h20" strokeWidth="3.500" />
  </N>
);
const FitIcon = () => (
  <N>
    <rect x="1" y="5" width="88" height="84" strokeDasharray="16 7" strokeWidth="3" stroke="#777" /><path d="M58 58L86 86" stroke="#444" strokeWidth="12" /><circle cx="34" cy="34" r="32" fill="#e6efed" />
  </N>
);
const DisplayIcon = () => (
  <N>
    <path d="M36 74V80L20 88H70L54 80V74" fill="#cdd0d8" /><rect x="2" y="2" width="86" height="70" fill="#f5f6f8" /><rect x="10" y="10" width="70" height="50" fill="#9fbfe6" stroke="#5f83b5" />
  </N>
);
const GridIcon = () => (
  <N>
    <defs><linearGradient id="ng" x1="0" y1="0" x2="0" y2="1"><stop offset="0" stopColor="#fff" /><stop offset="1" stopColor="#a3a8b6" /></linearGradient></defs>
    <rect x="2" y="3" width="84" height="84" fill="url(#ng)" /><path d="M14 3V87M26 3V87M38 3V87M50 3V87M62 3V87M74 3V87M2 15H86M2 27H86M2 39H86M2 51H86M2 63H86M2 75H86" strokeWidth="2.500" />
  </N>
);
const ViewsIcon = () => (
  <N>
    <rect x="1" y="9" width="86" height="74" fill="#a5c4ea" stroke="#3f5f86" /><path d="M44 9V83M1 46H87" stroke="#3f5f86" strokeWidth="5" />
    <path d="M8 16H36V39H8zM52 16H80V39H52zM8 53H36V76H8zM52 53H80V76H52z" stroke="#6287b8" strokeWidth="3" />
  </N>
);

/* ---------- notification ---------- */

const Toast = styled.div`
  position: absolute;
  right: 9px;
  bottom: 47px;
  display: flex;
  gap: 20px;
  width: 638px;
  height: 147px;
  padding: 24px 0 0 17px;
  border: 2px solid #ececec;
  border-radius: 3px;
  background: linear-gradient(#e4e4e4, #c9c9c9);
  color: #000;
`;

const ToastTitle = styled.div`
  margin-top: -1px;
  font-size: 26px;
  font-weight: 700;
  line-height: 28px;
  letter-spacing: 0.2px;
`;

const ToastText = styled.p`
  margin: 18px 0 0;
  font-size: 22.500px;
  line-height: 26px;
  letter-spacing: 0.12px;
  white-space: pre;
`;

const StatusIcons = styled.div`
  position: absolute;
  right: 25px;
  bottom: 9px;
  display: flex;
  align-items: center;
  gap: 21px;
`;

const Warning = ({ w, h, id }: { w: number; h: number; id: string }) => (
  <svg width={w} height={h} viewBox="0 0 64 57" preserveAspectRatio="none">
    <defs><linearGradient id={id} x1="0" y1="0" x2="0" y2="1"><stop offset="0" stopColor="#fff35a" /><stop offset=".5" stopColor="#fff48e" /><stop offset=".55" stopColor="#ffc81e" /><stop offset="1" stopColor="#ffb400" /></linearGradient></defs>
    <path d="M32 3L61 51Q61 54 58 54H6Q3 54 3 51z" fill={`url(#${id})`} stroke="#222" strokeWidth="4" strokeLinejoin="round" />
    <path d="M28 18Q32 12 36 18L34 38H30z" fill="#222" /><path d="M28 18Q32 12 36 18L35 28H29z" fill="#777" /><circle cx="32" cy="45" r="4" fill="#000" />
  </svg>
);

const Assistant = () => (
  <svg width="32" height="33" viewBox="0 0 32 33">
    <path d="M16 0A16 16 0 0 1 32 16V33H16A16 16.500 0 0 1 16 0z" fill="#000" />
    <path d="M7 17L19 9M6 21L24 10M12 21L24 14M18 21L24 18" stroke="#fff" strokeWidth="2" />
  </svg>
);

export default function App() {
  return (
    <Shell>
      <GlobalStyle />
      <Window>
        <Ribbon>
          <WorkspaceButton>DESIGN<Caret /></WorkspaceButton>
          <RibbonBody>
            <Tabs>
              {TABS.map(([t, w], i) => <Tab key={t} $w={w} $active={i === 0}>{t}</Tab>)}
            </Tabs>
            <Groups>
              {GROUPS.map((g) => (
                <Group key={g.label} $w={g.width}>
                  <Tools $inset={g.inset}>{g.tools.map((T, i) => <T key={i} />)}</Tools>
                  <GroupLabel $inset={g.labelInset}>{g.label}<Caret /></GroupLabel>
                </Group>
              ))}
              <Group $w={150} $last>
                <Tools $inset={37}><SelectTile><SelectIcon /></SelectTile></Tools>
                <GroupLabel $inset={28}>SELECT<Caret /></GroupLabel>
              </Group>
            </Groups>
          </RibbonBody>
        </Ribbon>
        <Viewport>
          <Sketches />
          <SideDock>
            <div>
              <PanelBar>
                <CollapseSlot>
                  <svg width="20" height="13" viewBox="0 0 20 13"><path d="M0 6.500L10 0V13zM10 6.500L20 0V13z" fill="#333" /></svg>
                </CollapseSlot>
                <PanelTitle>BROWSER</PanelTitle>
                <Badge />
              </PanelBar>
              <Tree>{TREE.map((n, i) => <TreeItem key={i} n={n} />)}</Tree>
            </div>
            <PanelBar>
              <CollapseSlot />
              <PanelTitle>COMMENTS</PanelTitle>
              <Badge plus />
            </PanelBar>
          </SideDock>
          <ViewCube />
          <NavBar>
            <NavItem $w={66} $gap={10}><OrbitIcon /><Caret /></NavItem>
            <NavItem $w={51}><LookIcon /></NavItem>
            <NavItem $w={52}><PanIcon /></NavItem>
            <NavItem $w={52}><ZoomIcon /></NavItem>
            <NavItem $w={66} $gap={11}><FitIcon /><Caret /></NavItem>
            <NavItem $w={62}><DisplayIcon /><Caret /></NavItem>
            <NavItem $w={62}><GridIcon /><Caret /></NavItem>
            <NavItem $w={55}><ViewsIcon /><Caret /></NavItem>
          </NavBar>
          <Toast>
            <Warning w={64} h={57} id="warn-l" />
            <div>
              <ToastTitle>Slow Performance</ToastTitle>
              <ToastText>{"Fusion is encountering performance issues.\nClick here to diagnose."}</ToastText>
            </div>
          </Toast>
          <StatusIcons>
            <Warning w={32} h={29} id="warn-s" />
            <Assistant />
          </StatusIcons>
        </Viewport>
      </Window>
      <DesktopStrip />
    </Shell>
  );
}
